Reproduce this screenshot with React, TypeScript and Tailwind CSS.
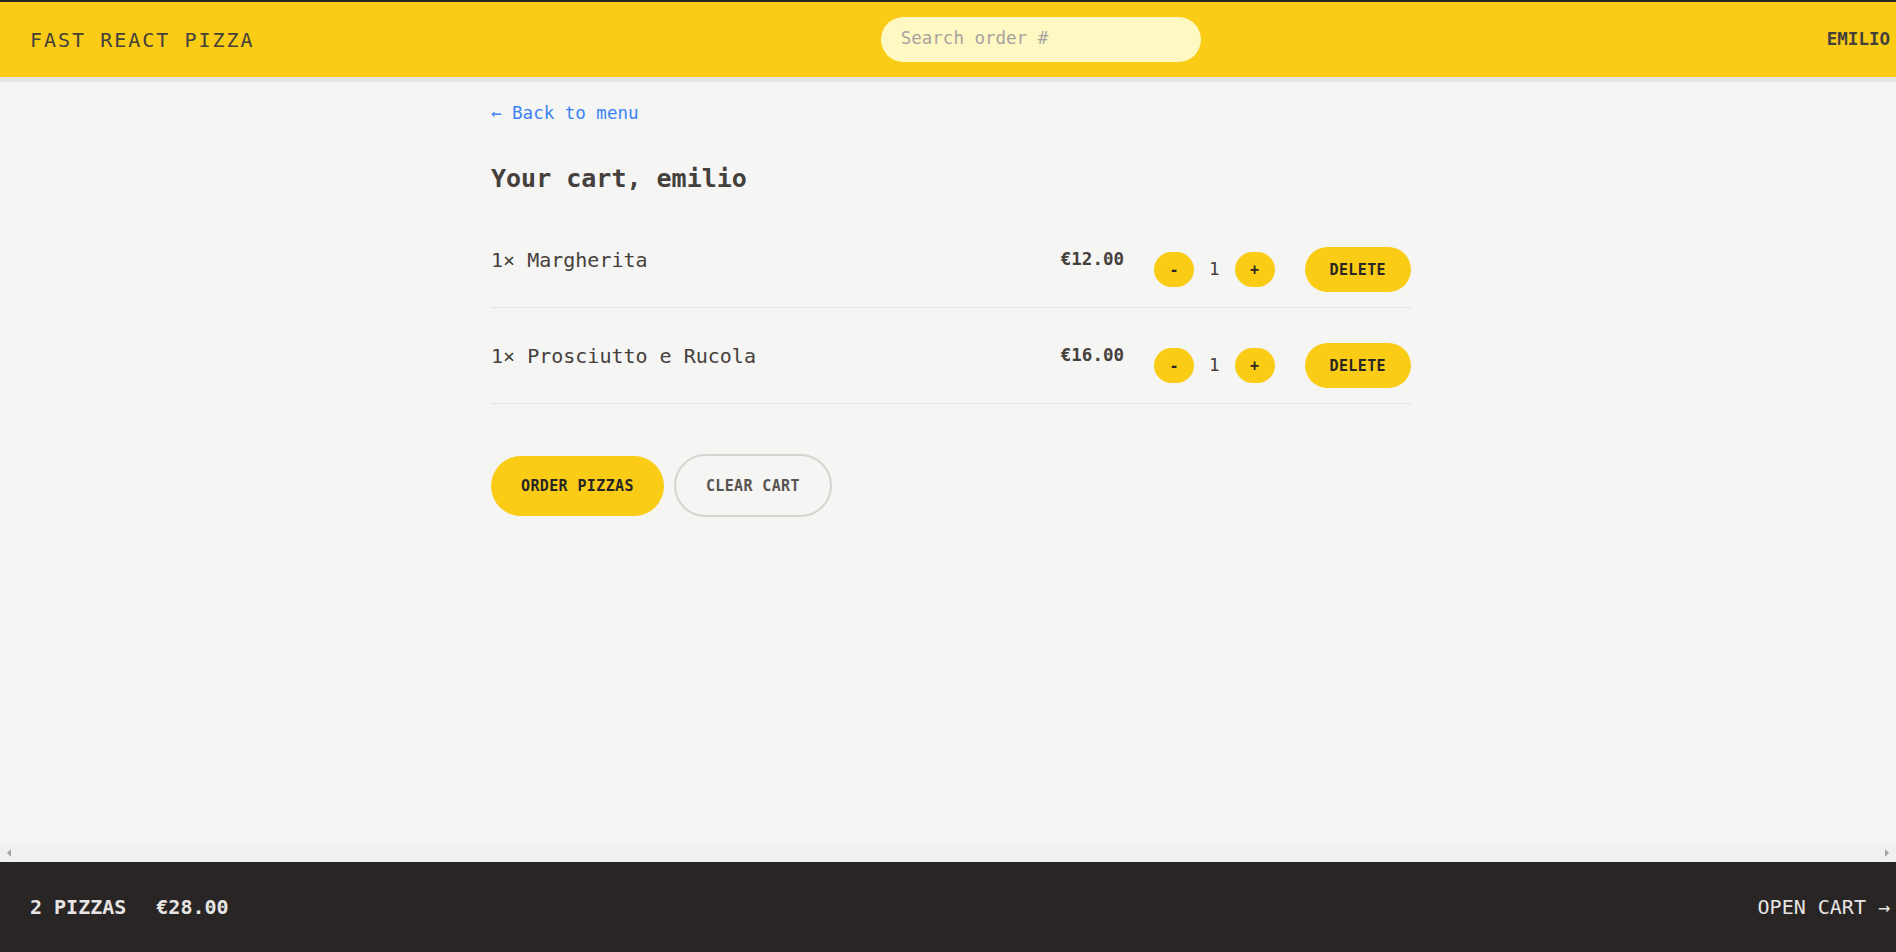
import React from "react";

const cartItems = [
  { id: 1, name: "Margherita", quantity: 1, totalPrice: 12 },
  { id: 2, name: "Prosciutto e Rucola", quantity: 1, totalPrice: 16 },
];

function formatCurrency(value: number) {
  return "€" + value.toFixed(2);
}

function Header() {
  return (
    <header className="flex items-center justify-between border-t-2 border-b-[5px] border-t-[#262626] border-b-[#e7e5e4] bg-[#facc15] py-[15px] pl-[30px] pr-[6px] uppercase">
      <a href="#" className="text-[20px] leading-[30px] tracking-[0.1em]">
        Fast React Pizza
      </a>
      <input
        placeholder="Search order #"
        className="h-[45px] w-[320px] rounded-full bg-[#fef9c3] px-[20px] pb-[4px] text-[17.5px] leading-[25px] placeholder:text-[#a8a29e] focus:outline-none"
      />
      <div className="text-[17.5px] font-semibold leading-[25px]">emilio</div>
    </header>
  );
}

function UpdateItemQuantity({ quantity }: { quantity: number }) {
  return (
    <div className="flex items-center gap-[15px]">
      <button className="flex h-[35px] w-[40px] items-center justify-center rounded-full bg-[#facc15] text-[15px] font-semibold text-[#292524]">
        -
      </button>
      <span className="text-[17.5px] font-medium leading-[25px]">{quantity}</span>
      <button className="flex h-[35px] w-[40px] items-center justify-center rounded-full bg-[#facc15] text-[15px] font-semibold text-[#292524]">
        +
      </button>
    </div>
  );
}

function CartItem({ item }: { item: (typeof cartItems)[number] }) {
  return (
    <li className="flex items-center justify-between py-[15px]">
      <p>
        {item.quantity}&times; {item.name}
      </p>
      <div className="flex items-center gap-[30px]">
        <p className="text-[17.5px] font-bold leading-[25px]">
          {formatCurrency(item.totalPrice)}
        </p>
        <div className="mt-[20px] flex items-center gap-[30px]">
          <UpdateItemQuantity quantity={item.quantity} />
          <button className="rounded-full bg-[#facc15] px-[25px] py-[12.5px] text-[15px] font-semibold uppercase leading-[20px] tracking-[0.025em] text-[#292524]">
            Delete
          </button>
        </div>
      </div>
    </li>
  );
}

function Cart() {
  return (
    <div className="px-[20px] py-[15px]">
      <div>
        <a href="#" className="text-[17.5px] text-[#3b82f6]">
          &larr; Back to menu
        </a>
      </div>
      <h2 className="mt-[33px] text-[25px] font-semibold leading-[35px]">
        Your cart, emilio
      </h2>
      <ul className="mt-[16px] divide-y divide-[#e7e5e4] border-b border-[#e7e5e4]">
        {cartItems.map((item) => (
          <CartItem key={item.id} item={item} />
        ))}
      </ul>
      <div className="mt-[50px] flex items-center gap-[10px]">
        <button className="rounded-full bg-[#facc15] px-[30px] py-[20px] text-[15px] font-semibold uppercase leading-[20px] tracking-[0.025em] text-[#292524]">
          Order pizzas
        </button>
        <button className="rounded-full border-2 border-[#d6d3d1] px-[30px] py-[19.5px] text-[15px] font-semibold uppercase leading-[20px] tracking-[0.025em] text-[#57534e]">
          Clear cart
        </button>
      </div>
    </div>
  );
}

function CartOverview() {
  return (
    <div className="flex h-[90px] items-center justify-between bg-[#292524] pl-[30px] pr-[6px] text-[20px] uppercase leading-[30px] text-[#e7e5e4]">
      <p className="flex gap-[30px] font-semibold">
        <span>2 pizzas</span>
        <span>€28.00</span>
      </p>
      <a href="#">Open cart &rarr;</a>
    </div>
  );
}

export default function App() {
  return (
    <div className="grid h-screen grid-rows-[auto_1fr_auto] bg-[#f5f5f4] font-['DejaVu_Sans_Mono',monospace] text-[20px] leading-[30px] text-[#44403c]">
      <Header />
      <div className="flex min-h-0 flex-col">
        <div className="min-h-0 flex-1 overflow-auto pl-[6px]">
          <main className="mx-auto max-w-[960px]">
            <Cart />
          </main>
        </div>
        {/* horizontal scrollbar strip */}
        <div className="flex h-[18px] items-center justify-between bg-[#f0f0f0] px-[7px]">
          <span className="h-0 w-0 border-y-[4px] border-r-[4px] border-y-transparent border-r-[#a3a3a3]" />
          <span className="h-0 w-0 border-y-[4px] border-l-[4px] border-y-transparent border-l-[#a3a3a3]" />
        </div>
      </div>
      <CartOverview />
    </div>
  );
}
